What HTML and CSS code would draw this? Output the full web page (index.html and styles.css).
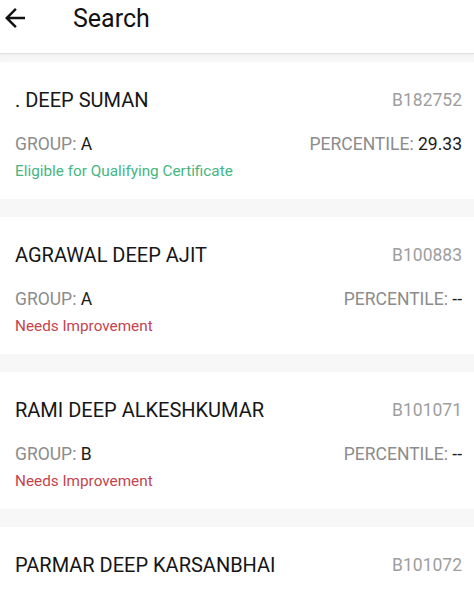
FILE: index.html
```html
<!DOCTYPE html>
<html>
<head>
<meta charset="utf-8">
<link rel="stylesheet" href="styles.css">
</head>
<body>
<header class="topbar">
  <span class="back">
    <svg viewBox="0 0 24 24" width="30" height="30"><path d="M20 11H7.83l5.59-5.59L12 4l-8 8 8 8 1.41-1.41L7.83 13H20v-2z" fill="#111"/></svg>
  </span>
  <h1 class="title">Search</h1>
</header>
<main class="list">
  <section class="card">
    <div class="row name-row"><span class="name">. DEEP SUMAN</span><span class="code">B182752</span></div>
    <div class="row meta-row"><span><span class="label">GROUP: </span><span class="val">A</span></span><span><span class="label">PERCENTILE: </span><span class="val">29.33</span></span></div>
    <div class="status good">Eligible for Qualifying Certificate</div>
  </section>
  <section class="card">
    <div class="row name-row"><span class="name">AGRAWAL DEEP AJIT</span><span class="code">B100883</span></div>
    <div class="row meta-row"><span><span class="label">GROUP: </span><span class="val">A</span></span><span><span class="label">PERCENTILE: </span><span class="val">--</span></span></div>
    <div class="status bad">Needs Improvement</div>
  </section>
  <section class="card">
    <div class="row name-row"><span class="name">RAMI DEEP ALKESHKUMAR</span><span class="code">B101071</span></div>
    <div class="row meta-row"><span><span class="label">GROUP: </span><span class="val">B</span></span><span><span class="label">PERCENTILE: </span><span class="val">--</span></span></div>
    <div class="status bad">Needs Improvement</div>
  </section>
  <section class="card last">
    <div class="row name-row"><span class="name">PARMAR DEEP KARSANBHAI</span><span class="code">B101072</span></div>
  </section>
</main>
</body>
</html>
```
FILE: styles.css
```css
html, body {
  margin: 0;
  padding: 0;
  background: #f7f7f7;
  font-family: Roboto, "Liberation Sans", sans-serif;
  overflow: hidden;
  height: 592px;
}
.topbar {
  background: #fff;
  border-bottom: 1px solid #e0e0e0;
  box-shadow: 0 1px 3px rgba(0,0,0,0.05);
  display: flex;
  align-items: flex-start;
  box-sizing: border-box;
  height: 54px;
}
.back {
  display: flex;
  width: 30px;
  height: 30px;
  margin-top: 3px;
}
.title {
  margin: 5px 0 0 43px;
  font-size: 25px;
  font-weight: 400;
  line-height: 28px;
  color: #111;
}
.list {
  display: flex;
  flex-direction: column;
  gap: 18px;
  padding-top: 8px;
}
.card {
  background: #fff;
  padding: 26px 12px 18px 15px;
  display: flex;
  flex-direction: column;
}
.card.last {
  padding-bottom: 40px;
}
.row {
  display: flex;
  justify-content: space-between;
  align-items: center;
}
.name-row {
  height: 24px;
}
.name {
  font-size: 20px;
  color: #161616;
}
.code {
  font-size: 17.5px;
  color: #9e9e9e;
}
.meta-row {
  margin-top: 22px;
  height: 20px;
  font-size: 17.5px;
}
.label {
  color: #8c8c8c;
}
.val {
  color: #1c1c1c;
}
.status {
  margin-top: 7px;
  height: 20px;
  line-height: 20px;
  font-size: 15.3px;
}
.good {
  color: #45b681;
}
.bad {
  color: #c4444e;
}
```
